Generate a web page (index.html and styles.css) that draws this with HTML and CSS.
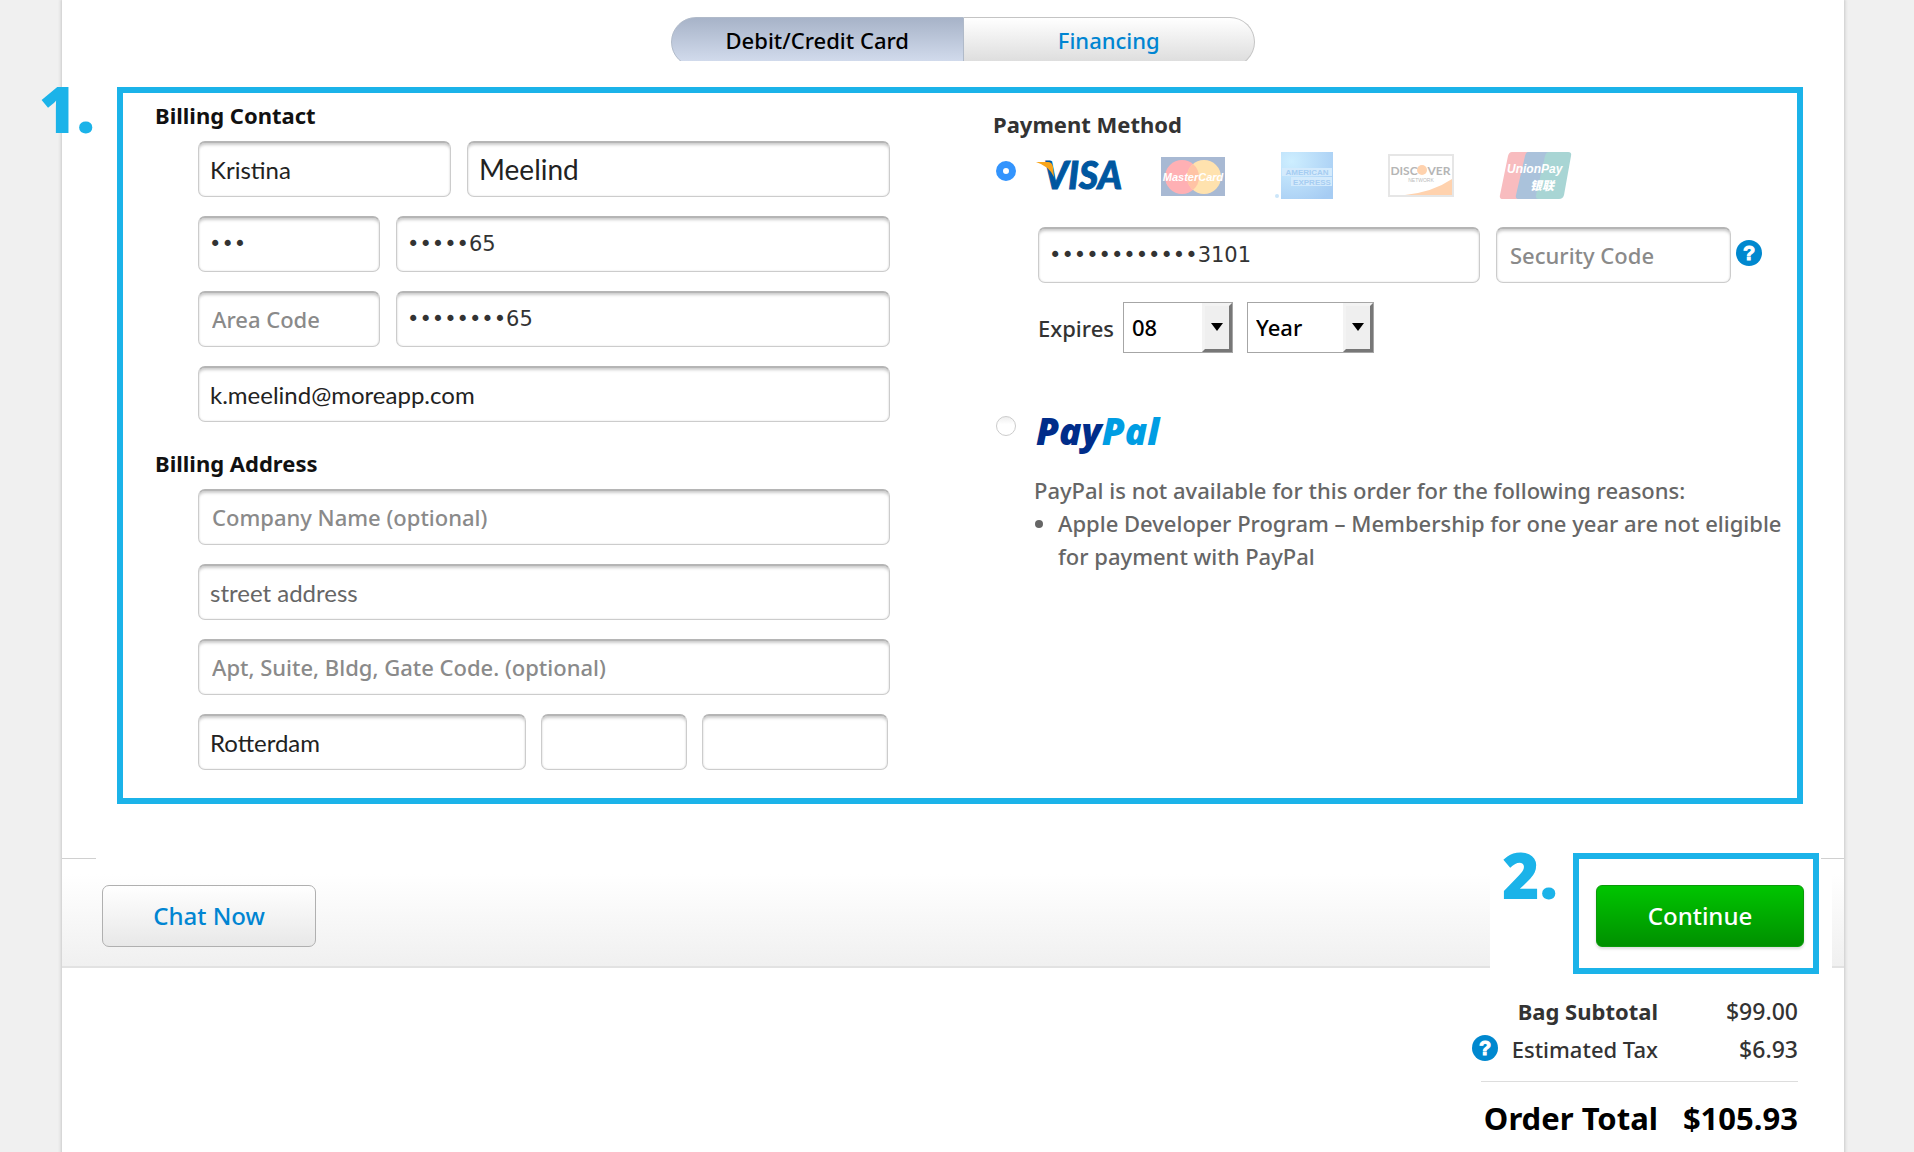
FILE: index.html
```html
<!DOCTYPE html>
<html lang="en">
<head>
<meta charset="utf-8">
<title>Checkout - Payment</title>
<link rel="stylesheet" href="styles.css">
</head>
<body>
<main class="page">
  <div class="tabs">
    <button class="tab active" type="button">Debit/Credit Card</button>
    <button class="tab" type="button">Financing</button>
  </div>

  <section class="step step-one">
    <span class="step-number">1.</span>
    <div class="billing">
      <h2>Billing Contact</h2>
      <div class="fields">
        <div class="row name-row">
          <input class="field typed" type="text" aria-label="First Name" value="Kristina">
          <input class="field typed large" type="text" aria-label="Last Name" value="Meelind">
        </div>
        <div class="row phone-row">
          <input class="field masked" type="text" aria-label="Area Code" value="•••">
          <input class="field masked" type="text" aria-label="Primary Phone" value="•••••65">
        </div>
        <div class="row phone-row">
          <input class="field" type="text" aria-label="Area Code" placeholder="Area Code">
          <input class="field masked" type="text" aria-label="Secondary Phone" value="••••••••65">
        </div>
        <input class="field typed" type="email" aria-label="Email" value="k.meelind@moreapp.com">
      </div>

      <h2>Billing Address</h2>
      <div class="fields">
        <input class="field" type="text" aria-label="Company Name" placeholder="Company Name (optional)">
        <input class="field typed" type="text" aria-label="Street Address" placeholder="street address">
        <input class="field" type="text" aria-label="Apartment" placeholder="Apt, Suite, Bldg, Gate Code. (optional)">
        <div class="row city-row">
          <input class="field typed" type="text" aria-label="City" value="Rotterdam">
          <input class="field" type="text" aria-label="State">
          <input class="field" type="text" aria-label="Zip Code">
        </div>
      </div>
    </div>

    <div class="payment">
      <h2>Payment Method</h2>
      <div class="method">
        <input type="radio" name="method" id="card" checked>
        <label class="cards" for="card">
          <svg width="86" height="47" viewBox="0 0 86 47" role="img" aria-label="Visa">
            <text class="visa-text" x="8" y="37">VISA</text>
            <path d="M0 10h12q4 0 5 5l1 10Q13 14 0 10z" fill="#f9a51a"/>
          </svg>
          <svg width="64" height="47" viewBox="0 0 64 47" role="img" aria-label="MasterCard">
            <rect y="5" width="64" height="39" fill="#a8b9d3"/>
            <circle cx="21" cy="25" r="17" fill="#ffb0b4"/>
            <circle cx="43" cy="25" r="17" fill="#ffe2ae"/>
            <path d="M32 12a17 17 0 0 1 0 26a17 17 0 0 1 0-26z" fill="#ffc3a5"/>
            <text class="mc-text" x="32" y="29">MasterCard</text>
          </svg>
          <svg width="66" height="47" viewBox="0 0 66 47" role="img" aria-label="American Express">
            <defs>
              <radialGradient id="amex" cx="20%" cy="20%" r="100%">
                <stop offset="0" stop-color="#cdeeff"/>
                <stop offset="1" stop-color="#a6ccf3"/>
              </radialGradient>
            </defs>
            <rect x="7" width="52" height="47" fill="url(#amex)"/>
            <rect x="8" y="16" width="50" height="8" fill="#d3eafc"/>
            <rect x="17" y="25" width="41" height="9" fill="#d3eafc"/>
            <text class="amex-text" x="33" y="23">AMERICAN</text>
            <text class="amex-text" x="38" y="33">EXPRESS</text>
            <circle cx="3" cy="44" r="2" fill="#cbe6fa"/>
          </svg>
          <svg width="66" height="47" viewBox="0 0 66 47" role="img" aria-label="Discover">
            <rect x="1" y="3" width="64" height="41" fill="#fff" stroke="#e6e6e6" stroke-width="2"/>
            <path d="M64 27v16H17Q45 40 64 27z" fill="#ffd2ae"/>
            <circle cx="34" cy="18" r="5" fill="#ffd2ae"/>
            <text class="disc-text" x="16" y="23">DISC</text>
            <text class="disc-text" x="51" y="23">VER</text>
            <text class="net-text" x="33" y="30">NETWORK</text>
          </svg>
          <svg width="73" height="47" viewBox="0 0 73 47" role="img" aria-label="UnionPay">
            <path d="M13 0h20L21 47H4q-4 0-3-4L9 4q1-4 4-4z" fill="#f8bcbf"/>
            <path d="M29 0h22L40 47H20q-4 0-3-4l9-39q1-4 3-4z" fill="#aac2db"/>
            <path d="M50 0h19q4 0 3 4l-7 39q-1 4-5 4H40q-4 0-3-4l9-39q1-4 4-4z" fill="#a8d5d4"/>
            <text class="up-text" x="8" y="21">UnionPay</text>
            <text class="cn-text" x="31" y="38">银联</text>
          </svg>
        </label>
      </div>

      <div class="card-fields">
        <div class="row card-row">
          <input class="field masked" type="text" aria-label="Card Number" value="••••••••••••3101">
          <input class="field" type="text" aria-label="Security Code" placeholder="Security Code">
          <button class="help" type="button" aria-label="About the security code">
            <svg width="26" height="26" viewBox="0 0 26 26">
              <circle cx="13" cy="13" r="13" fill="#0088cf"/>
              <text class="help-text" x="13" y="20">?</text>
            </svg>
          </button>
        </div>
        <div class="expires">
          <label for="month">Expires</label>
          <span class="picker month"><select id="month"><option>08</option></select></span>
          <span class="picker year"><select aria-label="Year"><option>Year</option></select></span>
        </div>
      </div>

      <div class="method paypal">
        <input type="radio" name="method" id="paypal">
        <label for="paypal">
          <svg width="140" height="56" viewBox="0 0 140 56" role="img" aria-label="PayPal">
            <text class="pp-text" x="0" y="38"><tspan fill="#002d8a">Pay</tspan><tspan fill="#009de3">Pal</tspan></text>
          </svg>
        </label>
      </div>
      <div class="notice">
        <p>PayPal is not available for this order for the following reasons:</p>
        <ul>
          <li>Apple Developer Program – Membership for one year are not eligible for payment with PayPal</li>
        </ul>
      </div>
    </div>
  </section>

  <div class="actions">
    <button class="chat" type="button">Chat Now</button>
    <div class="next">
      <span class="step-number">2.</span>
      <div class="step step-two">
        <button class="continue" type="button">Continue</button>
      </div>
    </div>
  </div>

  <table class="totals">
    <tbody>
      <tr class="subtotal"><th>Bag Subtotal</th><td>$99.00</td></tr>
      <tr class="tax">
        <th>
          <button class="help" type="button" aria-label="About estimated tax">
            <svg width="26" height="26" viewBox="0 0 26 26">
              <circle cx="13" cy="13" r="13" fill="#0088cf"/>
              <text class="help-text" x="13" y="20">?</text>
            </svg>
          </button>
          Estimated Tax
        </th>
        <td>$6.93</td>
      </tr>
    </tbody>
    <tfoot>
      <tr class="total"><th>Order Total</th><td>$105.93</td></tr>
    </tfoot>
  </table>
</main>
</body>
</html>
```
FILE: styles.css
```css
*, *::before, *::after {
  box-sizing: border-box;
}
body {
  margin: 0;
  background: #f0f0f0;
  color: #333;
  font-family: "Noto Sans", "Open Sans", sans-serif;
  font-size: 22px;
  font-weight: 500;
}
button, input, select {
  font: inherit;
  color: inherit;
}
button {
  cursor: pointer;
}
h2 {
  margin: 0;
  font-size: 22px;
  line-height: 30px;
  font-weight: 700;
}
.page {
  min-height: 100vh;
  margin: 0 70px 0 62px;
  padding-top: 17px;
  background: #fff;
  box-shadow: 0 0 3px 1px #c8c8c8;
}

/* tabs */
.tabs {
  display: flex;
  width: 584px;
  height: 44px;
  margin: 0 auto 26px 609px;
  overflow: hidden;
}
.tab {
  flex: 1;
  height: 50px;
  padding: 0 0 4px;
  border: 1px solid #c4c4c4;
  border-left: 0;
  border-radius: 0 25px 25px 0;
  background: linear-gradient(#fff, #dadada);
  color: #0085d2;
}
.tab.active {
  border: 1px solid #b0bac9;
  border-radius: 25px 0 0 25px;
  background: linear-gradient(#a7b3c8, #d6dff0);
  color: #000;
}

/* numbered steps */
.step {
  border: 6px solid #1bb3e9;
}
.step-number {
  position: absolute;
  color: #1bb3e9;
  font-size: 64px;
  line-height: 64px;
  font-weight: 900;
}
.step-one {
  position: relative;
  display: grid;
  grid-template-columns: 735fr 804fr;
  column-gap: 103px;
  margin: 0 41px 54px 55px;
  padding: 7px 0 28px 32px;
}
.step-one > .step-number {
  top: -16px;
  left: -84px;
}

/* form fields */
.billing h2 {
  color: #111;
}
.fields {
  display: flex;
  flex-direction: column;
  gap: 19px;
  margin: 11px 0 26px 43px;
}
.fields:last-child {
  margin-bottom: 0;
}
.row {
  display: grid;
  column-gap: 16px;
}
.name-row {
  grid-template-columns: 253fr 423fr;
}
.phone-row {
  grid-template-columns: 182fr 494fr;
}
.city-row {
  grid-template-columns: 328fr 146fr 186fr;
  column-gap: 15px;
  padding-right: 2px;
}
.field {
  width: 100%;
  min-width: 0;
  height: 56px;
  padding: 0 13px 2px;
  border: 1px solid #ccc;
  border-top: 2px solid #b5b5b5;
  border-radius: 7px;
  background: #fff;
  box-shadow: inset 0 3px 3px -1px #ccc, inset 0 0 2px #ddd;
}
.field::placeholder {
  color: #8a8a8a;
}
.typed {
  padding: 0 11px 1px;
  color: #222;
  font-family: Lato, sans-serif;
  font-size: 24px;
  font-weight: 400;
}
.typed::placeholder {
  color: #666;
}
.large {
  font-size: 28px;
}
.masked {
  padding: 0 10px 1px;
  font-family: "DejaVu Sans", sans-serif;
  font-size: 21px;
}

/* payment */
.payment {
  padding-top: 9px;
}
.method {
  display: flex;
  align-items: flex-start;
  margin-top: 13px;
}
.method input {
  appearance: none;
  flex: none;
  width: 20px;
  height: 20px;
  margin: 9px 0 0 3px;
  border: 1px solid #ccc;
  border-radius: 50%;
  background: linear-gradient(#eee, #fff 40%);
}
.method input:checked {
  border: 7px solid #3394fd;
  background: #fff;
}
.cards {
  display: grid;
  grid-template-columns: repeat(5, 114px);
  justify-items: center;
  margin-left: 6px;
}
.cards svg, .paypal svg, .help svg {
  display: block;
}
.visa-text {
  fill: #0057a0;
  stroke: #0057a0;
  stroke-width: 1px;
  font: italic 900 37px Lato, sans-serif;
}
.mc-text {
  fill: #fff;
  font: italic 700 11px "Liberation Sans", sans-serif;
  text-anchor: middle;
}
.amex-text {
  fill: #a6cdf2;
  font: 700 8px "Liberation Sans", sans-serif;
  text-anchor: middle;
}
.disc-text {
  fill: #b5b5b5;
  font: 700 12px Lato, sans-serif;
  text-anchor: middle;
}
.net-text {
  fill: #bbb;
  font: 5px "Liberation Sans", sans-serif;
  text-anchor: middle;
}
.up-text {
  fill: #fff;
  font: italic 700 12px "Liberation Sans", sans-serif;
}
.cn-text {
  fill: #fff;
  font: italic 900 12px "Noto Sans CJK SC", sans-serif;
}
.pp-text {
  font: italic 900 37px "Noto Sans", sans-serif;
}
.card-fields {
  margin: 28px 0 0 45px;
}
.card-row {
  grid-template-columns: 442fr 235fr 50fr;
}
.card-row .help {
  margin: 13px 0 0 -11px;
}
.help {
  width: 26px;
  height: 26px;
  padding: 0;
  border: 0;
  background: none;
}
.help-text {
  fill: #fff;
  stroke: #fff;
  stroke-width: 1px;
  font: 700 20px "Liberation Sans", sans-serif;
  text-anchor: middle;
}
.expires {
  display: flex;
  align-items: center;
  margin-top: 19px;
}
.picker {
  position: relative;
  height: 51px;
  margin-left: 9px;
  border: 1px solid #a6a6a6;
}
.picker select {
  appearance: none;
  width: 100%;
  height: 100%;
  padding: 0 8px 2px;
  border: 0;
  background: #fff;
  color: #000;
}
.picker::before {
  content: "";
  position: absolute;
  top: 0;
  right: 0;
  width: 30px;
  height: 49px;
  border: 3px solid;
  border-color: #f3f3f3 #777 #777 #f3f3f3;
  background: #efefef;
  pointer-events: none;
}
.picker::after {
  content: "";
  position: absolute;
  top: 20px;
  right: 9px;
  border: 6px solid transparent;
  border-top: 8px solid #000;
  border-bottom: 0;
  pointer-events: none;
}
.month {
  width: 110px;
}
.year {
  width: 127px;
  margin-left: 14px;
}
.paypal {
  margin-top: 54px;
}
.paypal label {
  margin-left: 20px;
}
.notice {
  margin: 11px 0 0 41px;
  color: #666;
  line-height: 33px;
}
.notice p {
  margin: 0;
}
.notice ul {
  margin: 0;
  padding-left: 24px;
}

/* bottom bar */
.actions {
  display: flex;
  align-items: flex-start;
  justify-content: space-between;
  height: 110px;
  border-bottom: 2px solid #e2e2e2;
  background:
    linear-gradient(#d0d0d0, #d0d0d0) left top / 34px 1px no-repeat,
    linear-gradient(#d0d0d0, #d0d0d0) right top / 23px 1px no-repeat,
    linear-gradient(#fff 15%, #f0f0f0);
}
.chat {
  width: 214px;
  height: 62px;
  margin: 27px 0 0 40px;
  padding: 0 0 2px;
  border: 1px solid #b0b0b0;
  border-radius: 7px;
  background: linear-gradient(#fff, #e8e8e8);
  color: #0085d2;
  font-size: 24px;
}
.next {
  position: relative;
  width: 342px;
  height: 109px;
  margin: 1px 12px 0 0;
  background: #fff;
}
.next .step-number {
  top: -16px;
  left: 12px;
}
.step-two {
  width: 246px;
  height: 121px;
  margin: -6px 13px 0 auto;
  padding: 26px 9px 0 17px;
}
.continue {
  width: 100%;
  height: 62px;
  padding: 0 0 2px;
  border: 1px solid #0a9a0a;
  border-radius: 6px;
  background: linear-gradient(#00c500, #009000);
  box-shadow: 0 2px 3px #ddd;
  color: #fff;
  font-size: 24px;
}

/* order totals */
.totals {
  width: 317px;
  margin: 24px 46px 0 auto;
  border-collapse: collapse;
  font-size: 23px;
}
.totals th, .totals td {
  height: 38px;
  padding: 0;
  text-align: right;
  white-space: nowrap;
}
.totals td {
  width: 140px;
}
.tax th {
  position: relative;
  font-size: 22px;
  font-weight: 500;
}
.tax .help {
  position: absolute;
  top: 5px;
  left: -9px;
}
.subtotal th {
  font-size: 22px;
  font-weight: 700;
}
.totals .tax th, .totals .tax td {
  height: 51px;
  padding-bottom: 13px;
}
.totals .total th, .totals .total td {
  height: 74px;
  border-top: 1px solid #ddd;
  color: #000;
  font-size: 31px;
  font-weight: 700;
}
```
